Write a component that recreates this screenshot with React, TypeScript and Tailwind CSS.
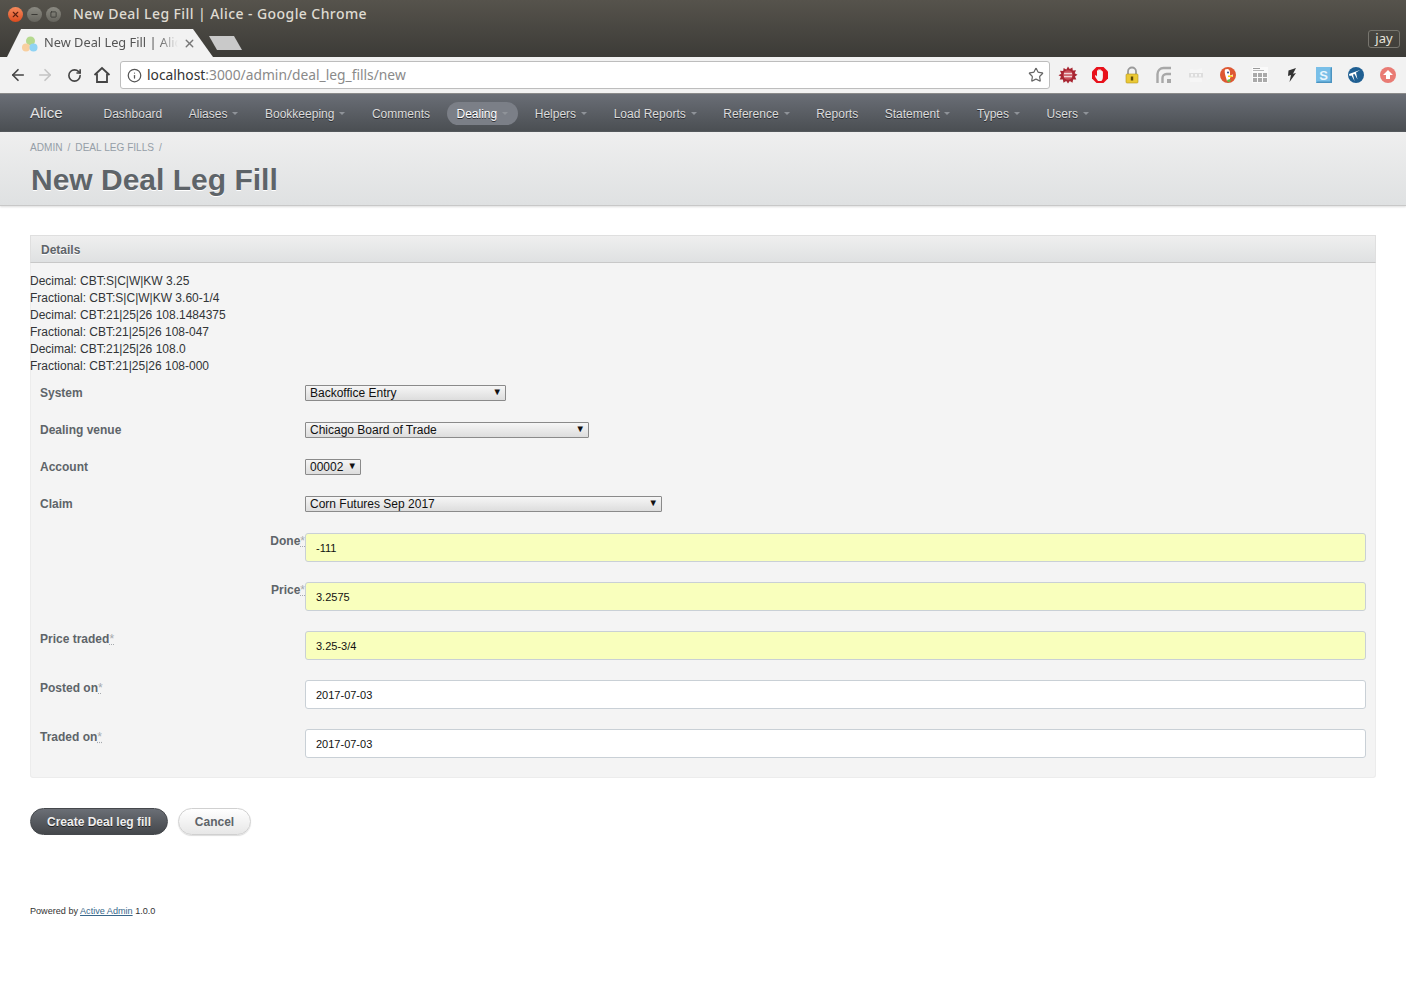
import { ArrowLeft, ArrowRight, RotateCw, Info, Star, X, Minus, Square } from "lucide-react"

const navItems = [
  { label: "Dashboard" },
  { label: "Aliases", menu: true },
  { label: "Bookkeeping", menu: true },
  { label: "Comments" },
  { label: "Dealing", menu: true, current: true },
  { label: "Helpers", menu: true },
  { label: "Load Reports", menu: true },
  { label: "Reference", menu: true },
  { label: "Reports" },
  { label: "Statement", menu: true },
  { label: "Types", menu: true },
  { label: "Users", menu: true },
]

const infoLines = [
  "Decimal: CBT:S|C|W|KW 3.25",
  "Fractional: CBT:S|C|W|KW 3.60-1/4",
  "Decimal: CBT:21|25|26 108.1484375",
  "Fractional: CBT:21|25|26 108-047",
  "Decimal: CBT:21|25|26 108.0",
  "Fractional: CBT:21|25|26 108-000",
]

const selects = [
  { label: "System", value: "Backoffice Entry", width: "w-[201px]" },
  { label: "Dealing venue", value: "Chicago Board of Trade", width: "w-[284px]" },
  { label: "Account", value: "00002", width: "w-[56px]" },
  { label: "Claim", value: "Corn Futures Sep 2017", width: "w-[357px]" },
]

const inputs = [
  { label: "Done", value: "-111", yellow: true, right: true },
  { label: "Price", value: "3.2575", yellow: true, right: true },
  { label: "Price traded", value: "3.25-3/4", yellow: true },
  { label: "Posted on", value: "2017-07-03" },
  { label: "Traded on", value: "2017-07-03" },
]

function ExtensionIcons() {
  return (
    <div className="flex items-center gap-[12px] pr-[8px]">
      <svg width="20" height="20" viewBox="0 0 20 20">
        <path d="M10 1.500l1.700 2.600 2.700-1.700.4 3.200 3.200-.3-1.300 3 2.800 1.500-2.500 1.800 1.300 3-3.200-.1-.6 3.200-2.700-1.700-1.800 2.500-1.800-2.500-2.700 1.700-.6-3.200-3.200.1 1.300-3L.5 10.300 3.300 8.800 2 5.800l3.200.3.4-3.200 2.700 1.700z" fill="#a82632" />
        <circle cx="10" cy="10" r="4.800" fill="#c9505a" />
        <rect x="6" y="7.800" width="8" height="1.500" fill="#f0d4d6" />
        <rect x="6" y="10.800" width="8" height="1.500" fill="#f0d4d6" />
      </svg>
      <svg width="20" height="20" viewBox="0 0 20 20">
        <path d="M6.500 2h7L18 6.500v7L13.500 18h-7L2 13.500v-7z" fill="#e8111b" />
        <path d="M8 16c-1-1.500-2.700-3.500-3-5-.2-.8.700-1 1.200-.4L7 11.500V6c0-.9 1.200-.9 1.200 0V4.800c0-.9 1.300-.9 1.300 0V5c0-.9 1.300-.9 1.300 0v1c0-.9 1.200-.9 1.200 0 .6 0 .9.300.9 1V12c0 2-.7 3-1.500 4z" fill="#f4f4f4" />
      </svg>
      <svg width="20" height="20" viewBox="0 0 20 20">
        <path d="M6 9V6.500a4 4 0 018 0V9" fill="none" stroke="#9a9a9a" strokeWidth="1.800" />
        <rect x="4" y="9" width="12" height="9" rx="1" fill="#ebc936" stroke="#b39420" strokeWidth="0.600" />
        <rect x="8.800" y="11.500" width="2.400" height="4" fill="#5c4a08" />
      </svg>
      <svg width="20" height="20" viewBox="0 0 20 20" fill="none" stroke="#a8a8a8">
        <path d="M3.500 18V9a6 6 0 016-6H17" strokeWidth="2.400" />
        <path d="M8.500 18v-5a4 4 0 014-4H17" strokeWidth="2.400" />
        <rect x="13" y="14" width="4" height="4" fill="#a8a8a8" stroke="none" />
      </svg>
      <svg width="20" height="20" viewBox="0 0 20 20">
        <path d="M4 4l6 1 6-2v14H4z" fill="#f6f6f6" />
        <rect x="3" y="8" width="14" height="4.500" fill="#dddddd" />
        <rect x="5" y="9" width="2" height="2.500" fill="#f5f5f5" />
        <rect x="9" y="9" width="2" height="2.500" fill="#f5f5f5" />
        <rect x="13" y="9" width="2" height="2.500" fill="#f5f5f5" />
      </svg>
      <svg width="20" height="20" viewBox="0 0 20 20">
        <circle cx="10" cy="10" r="8" fill="#de5833" />
        <path d="M7 4.500c3-1.500 5 0 5 3v3l3-1v2l-3 1v3.500H9c-1-4-3-8.500-2-11.500z" fill="#fff" />
        <circle cx="10" cy="7.500" r="1" fill="#2d4f8e" />
        <path d="M10 10.500h5l-1 1.500h-4z" fill="#fdd20a" />
        <path d="M9 15l3-1 1 2-3 1.500z" fill="#65bc46" />
      </svg>
      <svg width="20" height="20" viewBox="0 0 20 20">
        <rect x="2" y="2" width="16" height="16" fill="#fafafa" />
        <rect x="3" y="3" width="7" height="1" fill="#9a9a9a" />
        <rect x="3" y="5" width="11" height="1" fill="#b5b5b5" />
        <path d="M3 8h4v4H3zM8 8h4v4H8zM13 8h4v4h-4zM3 13h4v4H3zM8 13h4v4H8zM13 13h4v4h-4z" fill="#a9a9a9" />
      </svg>
      <svg width="20" height="20" viewBox="0 0 20 20">
        <path d="M14 3L6.500 5.500 6 11l3-1-1.500 7L14 8l-3 .8z" fill="#333333" />
      </svg>
      <svg width="20" height="20" viewBox="0 0 20 20">
        <rect x="2" y="2" width="16" height="16" fill="#79bfe8" />
        <path d="M18 2v16H2l1.500-1.500H16.500V3.500z" fill="#4b93c0" />
        <text x="9.500" y="14.500" fontSize="13" fontWeight="700" fill="#eaf6fd" textAnchor="middle" fontFamily="Liberation Sans">S</text>
      </svg>
      <svg width="20" height="20" viewBox="0 0 20 20">
        <circle cx="10" cy="10" r="8" fill="#1f5f92" />
        <path d="M3 9l11-4-4 2.500 1.500 7L8.500 9 7 9.500 8.500 16 5.500 10.500 3.500 11z" fill="#fff" />
      </svg>
      <svg width="20" height="20" viewBox="0 0 20 20">
        <circle cx="10" cy="10" r="8" fill="#e97b74" />
        <path d="M10 5l5 5h-3v4H8v-4H5z" fill="#fff" />
      </svg>
    </div>
  )
}

function BrowserChrome() {
  return (
    <div className="font-['Noto_Sans',sans-serif]">
      <div className="bg-gradient-to-b from-[#56534c] to-[#3c3b37]">
        <div className="flex h-[28px] items-center pl-[8px]">
          <div className="flex items-center gap-[4px]">
            <div className="flex h-[15px] w-[15px] items-center justify-center rounded-full bg-gradient-to-b from-[#f58a5c] to-[#dc4a1c]">
              <X className="h-[9px] w-[9px] text-[#5c2010]" strokeWidth={3} />
            </div>
            <div className="flex h-[15px] w-[15px] items-center justify-center rounded-full bg-gradient-to-b from-[#8b8a82] to-[#66655e]">
              <Minus className="h-[9px] w-[9px] text-[#3c3b37]" strokeWidth={3} />
            </div>
            <div className="flex h-[15px] w-[15px] items-center justify-center rounded-full bg-gradient-to-b from-[#8b8a82] to-[#66655e]">
              <Square className="h-[7px] w-[7px] text-[#3c3b37]" strokeWidth={3} />
            </div>
          </div>
          <span className="mb-[2px] ml-[12px] text-[14px] font-medium tracking-[0.42px] text-[#dfdbd2]">New Deal Leg Fill | Alice - Google Chrome</span>
        </div>
        <div className="flex h-[29px] items-end">
          <div className="relative ml-[7px] flex h-[28px] w-[206px] items-center bg-[#f2f2f2] pl-[37px] [clip-path:polygon(0_100%,14px_0,186px_0,100%_100%)]">
            <svg width="18" height="18" viewBox="0 0 18 18" className="absolute left-[14px] top-[6px]">
              <circle cx="9.500" cy="6" r="4.500" fill="#b5d98f" />
              <circle cx="5" cy="12.500" r="4" fill="#f8cf9f" />
              <circle cx="12.500" cy="12.500" r="4" fill="#8fd3f4" />
            </svg>
            <span className="w-[134px] overflow-hidden whitespace-nowrap text-[12.800px] text-[#555555] [mask-image:linear-gradient(to_right,#000_85%,transparent)]">New Deal Leg Fill | Alice</span>
            <X className="ml-[5px] h-[13px] w-[13px] text-[#777777]" strokeWidth={2.500} />
          </div>
          <div className="mb-[7px] ml-[-4px] h-[14px] w-[33px] bg-[#c9c9c9] [clip-path:polygon(0_0,25px_0,100%_100%,8px_100%)]" />
          <div className="mb-[9px] ml-auto mr-[6px] flex h-[18px] w-[32px] items-center justify-center rounded-[3px] border border-[#77756e] text-[13px] text-[#e6e3db]">jay</div>
        </div>
      </div>
      <div className="flex h-[37px] items-center border-b border-[#8a8a8a] bg-[#f2f2f2]">
        <ArrowLeft className="ml-[9px] h-[18px] w-[18px] text-[#444444]" strokeWidth={2.200} />
        <ArrowRight className="ml-[9px] h-[18px] w-[18px] text-[#c4c4c4]" strokeWidth={2.200} />
        <RotateCw className="ml-[13px] h-[15px] w-[15px] text-[#444444]" strokeWidth={2.600} />
        <svg width="18" height="18" viewBox="0 0 18 18" fill="none" stroke="#444444" strokeWidth="1.800" className="ml-[11px]">
          <path d="M1.500 9L9 2l7.500 7" />
          <path d="M4 7.500V16h10V7.500" />
        </svg>
        <div className="ml-[9px] flex h-[28px] w-[930px] items-center rounded-[3px] border border-[#bdbdbd] bg-white pl-[6px] pr-[5px]">
          <Info className="h-[15px] w-[15px] text-[#555555]" strokeWidth={2} />
          <span className="ml-[5px] text-[13.800px] text-[#333333]">localhost<span className="text-[#8a8a8a]">:3000/admin/deal_leg_fills/new</span></span>
          <Star className="ml-auto h-[16px] w-[16px] text-[#666666]" strokeWidth={1.800} />
        </div>
        <div className="ml-auto">
          <ExtensionIcons />
        </div>
      </div>
    </div>
  )
}

function NavBar() {
  return (
    <div className="flex h-[38px] items-center bg-gradient-to-b from-[#6a6e76] to-[#4a4e52] pl-[30px] pt-[1px] [text-shadow:0_1px_0_#2a2c30]">
      <span className="mr-[31px] text-[15px] text-[#e4e4e4]">Alice</span>
      <div className="flex items-center gap-[6.550px]">
        {navItems.map((item) => (
          <div
            key={item.label}
            className={`flex h-[23px] items-center rounded-[12px] pl-[10px] pr-[10px] text-[12px] ${item.current ? "bg-[#7b7f87] text-white" : "text-[#dcdcdc]"}`}
          >
            {item.label}
            {item.menu && <span className="ml-[5px] h-0 w-0 border-x-[3.500px] border-t-[3.500px] border-x-transparent border-t-[#8f9399]" />}
          </div>
        ))}
      </div>
    </div>
  )
}

function TitleBar() {
  return (
    <div className="h-[74px] border-b border-[#c8c8c8] bg-gradient-to-b from-[#efefef] to-[#dfe1e2] pl-[30px] pt-[9px] shadow-[0_1px_2px_#dddddd]">
      <div className="flex gap-[5px] text-[10.100px] leading-[13px] text-[#959ea7]">
        <span>ADMIN</span><span>/</span><span>DEAL LEG FILLS</span><span>/</span>
      </div>
      <h2 className="ml-[1px] mt-[7px] text-[30px] font-bold leading-[37px] text-[#5e6469] [text-shadow:0_1px_0_#ffffff]">New Deal Leg Fill</h2>
    </div>
  )
}

function Required() {
  return <abbr className="font-normal text-[#a5a9ad] underline decoration-dotted">*</abbr>
}

function DetailsPanel() {
  return (
    <section className="mx-[30px] mt-[29px] rounded-[3px] border-x border-b border-[#ececec] bg-[#f4f4f4]">
      <h3 className="mx-[-1px] flex h-[28px] items-center border border-[#dfdfdf] border-b-[#c8c8c8] bg-gradient-to-b from-[#efefef] to-[#dfe1e2] pl-[10px] pt-[2px] text-[12px] font-bold text-[#5e6469] [text-shadow:0_1px_0_#ffffff]">Details</h3>
      <div className="pb-[19px] pr-[9px]">
        <div className="mb-[-1px] ml-[-1px] pt-[10px] text-[12px] leading-[17px] text-[#323537]">
          {infoLines.map((line, i) => (
            <div key={i}>{line}</div>
          ))}
        </div>
        <div className="flex flex-col">
          {selects.map((s) => (
            <div key={s.label} className="flex h-[37px] items-center pl-[9px]">
              <label className="w-[265px] pt-[1px] text-[12px] font-bold text-[#5e6469]">{s.label}</label>
              <div className={`flex h-[16px] items-center justify-between rounded-[1px] border border-[#8a8a8a] bg-gradient-to-b from-[#f6f6f6] to-[#dddddd] pl-[4px] pr-[3px] text-[12px] text-[#111111] ${s.width}`}>
                <span>{s.value}</span>
                <span className="text-[9.500px] text-[#111111]">▼</span>
              </div>
            </div>
          ))}
        </div>
        <div className="mt-[11px] flex flex-col gap-[20px]">
          {inputs.map((f) => (
            <div key={f.label} className="flex pl-[9px]">
              <label className={`w-[265px] text-[12px] font-bold leading-[16px] text-[#5e6469] ${f.right ? "text-right" : ""}`}>
                {f.label}<Required />
              </label>
              <div className={`flex h-[29px] flex-1 items-center rounded-[3px] border border-[#c9d0d6] pl-[10px] pt-[1px] text-[11px] text-[#111111] ${f.yellow ? "bg-[#f9ffbd]" : "bg-white"}`}>
                {f.value}
              </div>
            </div>
          ))}
        </div>
      </div>
    </section>
  )
}

export default function App() {
  return (
    <div className="min-h-[986px] bg-white font-['Liberation_Sans',Arial,sans-serif]">
      <BrowserChrome />
      <NavBar />
      <TitleBar />
      <DetailsPanel />
      <div className="ml-[30px] mt-[30px] flex gap-[10px] text-[12px] font-bold">
        <button className="flex h-[27px] w-[138px] items-center justify-center rounded-[14px] border border-[#45484c] bg-gradient-to-b from-[#6b6f76] to-[#44474b] pt-[1px] text-[#efefef] [text-shadow:0_1px_0_#222222]">Create Deal leg fill</button>
        <button className="flex h-[27px] w-[73px] items-center justify-center rounded-[14px] border border-[#d0d0d0] bg-gradient-to-b from-white to-[#e7e7e7] pt-[1px] text-[#5e6469] shadow-[0_1px_1px_#dddddd]">Cancel</button>
      </div>
      <p className="ml-[30px] mt-[70px] text-[9.100px] leading-[12px] text-[#333333]">
        Powered by <a className="text-[#38678b] underline">Active Admin</a> 1.0.0
      </p>
    </div>
  )
}
